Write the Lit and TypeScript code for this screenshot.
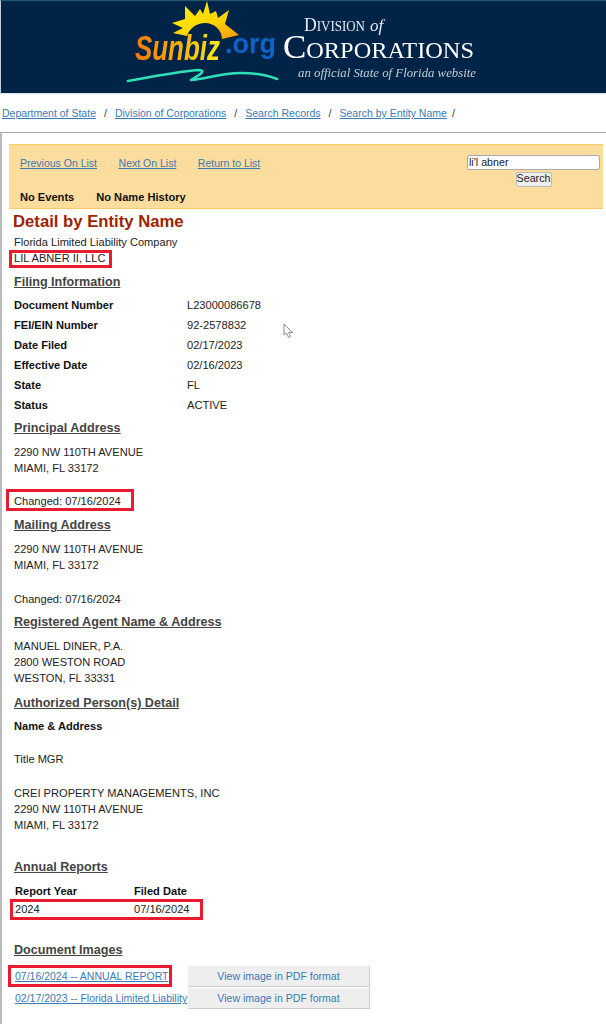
import { LitElement, html, css, svg } from "lit";
import { customElement } from "lit/decorators.js";

const logo = svg`
<svg class="logo" viewBox="1 0 606 92" width="606" height="92" xmlns="http://www.w3.org/2000/svg">
  <defs>
    <linearGradient id="sun" x1="0" y1="0" x2="1" y2="1">
      <stop offset="0" stop-color="#fff200"/><stop offset=".6" stop-color="#ffd400"/><stop offset="1" stop-color="#f59410"/>
    </linearGradient>
    <linearGradient id="biz" x1="0" y1="0" x2="1" y2="0">
      <stop offset="0" stop-color="#f2780f"/><stop offset=".45" stop-color="#f9a80e"/><stop offset="1" stop-color="#f8e81a"/>
    </linearGradient>
    <filter id="soft"><feGaussianBlur stdDeviation=".4"/></filter>
  </defs>
  <g filter="url(#soft)">
    <path fill="url(#sun)" d="M172 22 L185 18 L185 5 L195 15 L200 8 L203 13 L207 0 L210 13 L216 10 L218 17 L229 9 L225 23 L239 34 L222 38 A17 17 0 0 0 205 22 A19 19 0 0 0 187 35 L173 32 L183 27 Z"/>
    <text transform="translate(135 59) scale(.72 1)" class="sunbiz" fill="url(#biz)">Sunbiz</text>
    <text x="225" y="52" class="org">.org</text>
    <path d="M128 80 C150 76 175 71 198 69 C204 69 203 71 199 74 L191 79 C205 78 222 72 240 72 C255 72 268 74 277 78" fill="none" stroke="#2fe0b8" stroke-width="2.6" stroke-linecap="round" stroke-linejoin="round"/>
    <text x="304" y="30" class="div" textLength="61" lengthAdjust="spacingAndGlyphs"><tspan class="big">D</tspan>IVISION</text>
    <text x="370" y="30" class="of">of</text>
    <text x="283" y="56.5" class="corp" textLength="191" lengthAdjust="spacingAndGlyphs"><tspan class="big">C</tspan>ORPORATIONS</text>
    <text x="298" y="76" class="tag" textLength="178" lengthAdjust="spacingAndGlyphs">an official State of Florida website</text>
  </g>
</svg>`;

@customElement("app-root")
export class AppRoot extends LitElement {
  static styles = css`
    :host { display: block; width: 606px; height: 1024px; overflow: hidden; background: #fff; font-family: "Liberation Sans", Arial, sans-serif; font-size: 11.1px; color: #222; position: relative; }
    .head { height: 92px; background: #002447; border-top: 1px solid #1d5a6b; border-left: 1px solid #c4ccd4; border-bottom: 1px solid #dfe4ea; box-sizing: content-box; }
    .logo { display: block; }
    .sunbiz { font: italic 700 36px "Liberation Sans", sans-serif; }
    .org { font: 700 27px "Liberation Sans", sans-serif; fill: #0b63c9; }
    .div { font: 14px "Liberation Serif", serif; fill: #e8ecf0; }
    .div .big { font-size: 19px; }
    .of { font: italic 17px "Liberation Serif", serif; fill: #e8ecf0; }
    .corp { font: 23px "Liberation Serif", serif; fill: #fff; }
    .corp .big { font-size: 33px; }
    .tag { font: italic 12.5px "Liberation Serif", serif; fill: #c6ced6; }
    .crumbs { height: 38px; display: flex; align-items: center; padding-left: 2px; font-size: 10.5px; gap: 8px; color: #333; }
    .crumbs .last { margin-left: -3px; }
    a { color: #3a7ab5; text-decoration: underline; }
    .main { border-top: 1px solid #aaa; border-left: 2px solid #bbb; padding: 11px 3px 0 7px; height: 900px; box-sizing: border-box; }
    .banner { height: 65px; background: #fcdd9d; border-top: 1px solid #fdc966; border-bottom: 1px solid #fdc966; box-sizing: border-box; padding: 10px 3px 0 11px; display: grid; grid-template-columns: 1fr 133px; }
    .nav { display: flex; gap: 21.5px; align-items: flex-start; padding-top: 1px; line-height: 14px; font-size: 10.5px; }
    .search { display: flex; flex-direction: column; align-items: center; }
    .input { width: 133px; height: 15px; box-sizing: border-box; background: #fff; border: 1px solid #aaa; border-radius: 2px; font-size: 10.7px; line-height: 13px; padding-left: 1px; color: #222; }
    .btn { margin-top: 2px; width: 36px; height: 15px; box-sizing: border-box; border: 1px solid #bbb; border-radius: 2px; background: #efefef; font-size: 10.7px; line-height: 11px; text-align: center; color: #222; }
    .events { grid-column: 1 / 3; display: flex; gap: 22px; font-weight: 700; color: #111; line-height: 14px; margin-top: -2px; }
    .body { padding-left: 5px; }
    h1 { margin: 0 0 -1px -1px; padding-top: 1px; font-size: 16.7px; line-height: 24px; color: #9e2300; font-weight: 700; }
    .l { line-height: 16px; }
    h2 { margin: 0; font-size: 12.6px; line-height: 18px; color: #444; font-weight: 700; text-decoration: underline; }
    .mark { position: relative; display: inline-block; }
    .mark::after { content: ""; position: absolute; border: 3px solid #e81c2e; box-sizing: border-box; pointer-events: none; }
    .m1::after { left: -5px; right: -7px; top: 0px; bottom: -2px; }
    .m2::after { left: -8px; right: -13px; top: -4px; bottom: -2px; }
    .m3::after { left: -5px; right: 1px; top: -2px; bottom: -3px; }
    .m4::after { left: -7px; right: -3px; top: -1px; bottom: -1px; }
    .rows { margin-top: 4px; }
    .row { display: grid; grid-template-columns: 173px 1fr; line-height: 20px; }
    .b { font-weight: 700; color: #111; }
    .reports { margin: 7px 0 0 1px; width: 189px; line-height: 16px; display: flex; flex-direction: column; gap: 2px; }
    .rline { display: grid; grid-template-columns: 119px 70px; }
    .docs { margin: 7px 0 0 1px; display: grid; grid-template-columns: 173px 182px; grid-auto-rows: 21px; row-gap: 1px; }
    .docs a { font-size: 10.5px; line-height: 20px; white-space: nowrap; }
    .pdf { background: #eee; border-right: 1px solid #ccc; border-bottom: 1px solid #ccc; box-sizing: border-box; display: flex; align-items: center; justify-content: center; color: #3a7ab5; font-size: 10.55px; }
    .cursor { position: absolute; left: 283px; top: 323px; }
  `;

  render() {
    return html`
      <div class="head">${logo}</div>
      <div class="crumbs">
        <a>Department of State</a><span>/</span><a>Division of Corporations</a><span>/</span><a>Search Records</a><span>/</span><a>Search by Entity Name</a><span class="last">/</span>
      </div>
      <div class="main">
        <div class="banner">
          <div class="nav"><a>Previous On List</a><a>Next On List</a><a>Return to List</a></div>
          <div class="search"><div class="input">li'l abner</div><div class="btn">Search</div></div>
          <div class="events"><span>No Events</span><span>No Name History</span></div>
        </div>
        <div class="body">
          <h1>Detail by Entity Name</h1>
          <div class="l" style="margin-top:1px">Florida Limited Liability Company</div>
          <div class="l"><span class="mark m1">LIL ABNER II, LLC</span></div>
          <h2 style="margin-top:7px">Filing Information</h2>
          <div class="rows">
            ${[["Document Number","L23000086678"],["FEI/EIN Number","92-2578832"],["Date Filed","02/17/2023"],["Effective Date","02/16/2023"],["State","FL"],["Status","ACTIVE"]].map(([k,v]) => html`<div class="row"><span class="b">${k}</span><span>${v}</span></div>`)}
          </div>
          <h2 style="margin-top:4px">Principal Address</h2>
          <div class="l" style="margin-top:7px">2290 NW 110TH AVENUE</div>
          <div class="l">MIAMI, FL 33172</div>
          <div class="l" style="margin-top:17px"><span class="mark m2">Changed: 07/16/2024</span></div>
          <h2 style="margin-top:7px">Mailing Address</h2>
          <div class="l" style="margin-top:7px">2290 NW 110TH AVENUE</div>
          <div class="l">MIAMI, FL 33172</div>
          <div class="l" style="margin-top:18px">Changed: 07/16/2024</div>
          <h2 style="margin-top:6px">Registered Agent Name &amp; Address</h2>
          <div class="l" style="margin-top:7px">MANUEL DINER, P.A.</div>
          <div class="l">2800 WESTON ROAD</div>
          <div class="l">WESTON, FL 33331</div>
          <h2 style="margin-top:8px">Authorized Person(s) Detail</h2>
          <div class="l b" style="margin-top:6px">Name &amp; Address</div>
          <div class="l" style="margin-top:17px">Title MGR</div>
          <div class="l" style="margin-top:18px">CREI PROPERTY MANAGEMENTS, INC</div>
          <div class="l">2290 NW 110TH AVENUE</div>
          <div class="l">MIAMI, FL 33172</div>
          <h2 style="margin-top:25px">Annual Reports</h2>
          <div class="reports">
            <div class="rline b"><span>Report Year</span><span>Filed Date</span></div>
            <div class="rline mark m3"><span>2024</span><span>07/16/2024</span></div>
          </div>
          <h2 style="margin-top:24px">Document Images</h2>
          <div class="docs">
            <div><a class="mark m4">07/16/2024 -- ANNUAL REPORT</a></div><div class="pdf">View image in PDF format</div>
            <div><a>02/17/2023 -- Florida Limited Liability</a></div><div class="pdf">View image in PDF format</div>
          </div>
        </div>
      </div>
      <svg class="cursor" width="12" height="16" viewBox="0 0 12 16"><path d="M1 1 L1 12 L3.5 10 L5.5 14.5 L7.5 13.5 L5.8 9.5 L9.5 9.5 Z" fill="#fff" stroke="#888" stroke-width="1"/></svg>
    `;
  }
}
